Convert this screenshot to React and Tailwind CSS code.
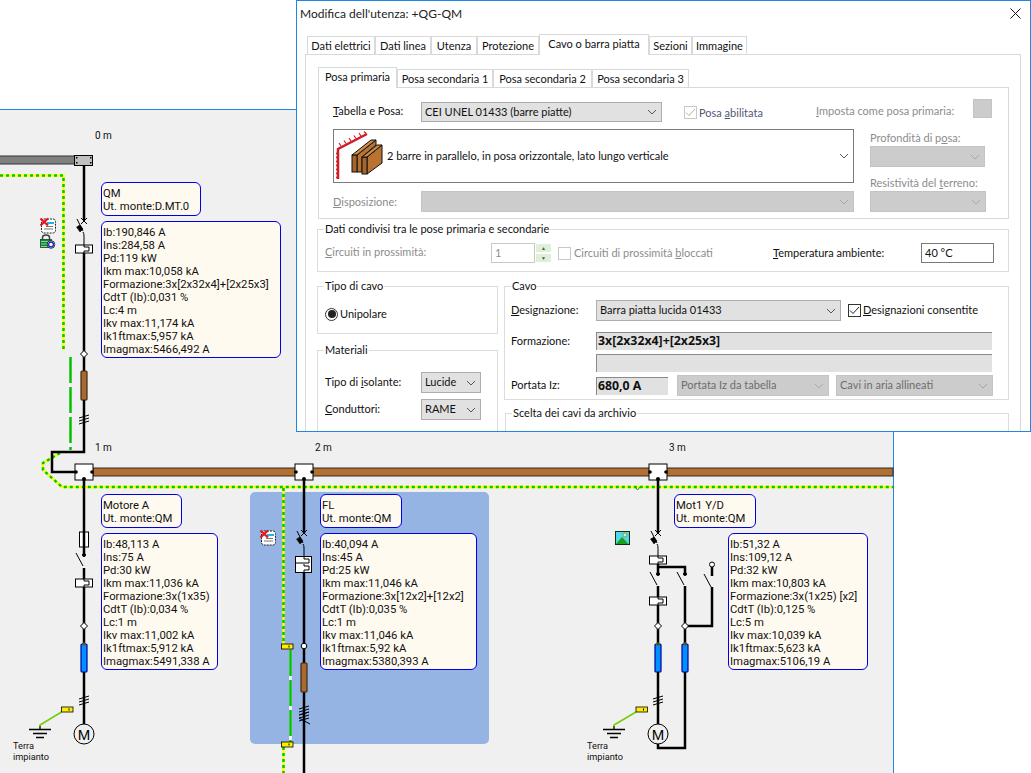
import React from "react";

const diagramFont = "font-['Roboto',sans-serif]";

const utenze = [
  {
    title: "QM",
    monte: "D.MT.0",
    headPos: "left-[101px] top-[182px] w-[100px]",
    infoPos: "left-[101px] top-[221px] w-[180px]",
    rows: [
      "Ib:190,846 A",
      "Ins:284,58 A",
      "Pd:119 kW",
      "Ikm max:10,058 kA",
      "Formazione:3x[2x32x4]+[2x25x3]",
      "CdtT (Ib):0,031 %",
      "Lc:4 m",
      "Ikv max:11,174 kA",
      "Ik1ftmax:5,957 kA",
      "Imagmax:5466,492 A",
    ],
  },
  {
    title: "Motore A",
    monte: "QM",
    headPos: "left-[101px] top-[494px] w-[81px]",
    infoPos: "left-[101px] top-[533px] w-[117px]",
    rows: [
      "Ib:48,113 A",
      "Ins:75 A",
      "Pd:30 kW",
      "Ikm max:11,036 kA",
      "Formazione:3x(1x35)",
      "CdtT (Ib):0,034 %",
      "Lc:1 m",
      "Ikv max:11,002 kA",
      "Ik1ftmax:5,912 kA",
      "Imagmax:5491,338 A",
    ],
  },
  {
    title: "FL",
    monte: "QM",
    headPos: "left-[320px] top-[494px] w-[82px]",
    infoPos: "left-[320px] top-[533px] w-[157px]",
    rows: [
      "Ib:40,094 A",
      "Ins:45 A",
      "Pd:25 kW",
      "Ikm max:11,046 kA",
      "Formazione:3x[12x2]+[12x2]",
      "CdtT (Ib):0,035 %",
      "Lc:1 m",
      "Ikv max:11,046 kA",
      "Ik1ftmax:5,92 kA",
      "Imagmax:5380,393 A",
    ],
  },
  {
    title: "Mot1 Y/D",
    monte: "QM",
    headPos: "left-[674px] top-[494px] w-[82px]",
    infoPos: "left-[728px] top-[533px] w-[140px]",
    rows: [
      "Ib:51,32 A",
      "Ins:109,12 A",
      "Pd:32 kW",
      "Ikm max:10,803 kA",
      "Formazione:3x(1x25) [x2]",
      "CdtT (Ib):0,125 %",
      "Lc:5 m",
      "Ikv max:10,039 kA",
      "Ik1ftmax:5,623 kA",
      "Imagmax:5106,19 A",
    ],
  },
];

// ---- diagram symbols ----

function Wire({ d, w = 2.5 }) {
  return <path d={d} fill="none" stroke="#000" strokeWidth={w} />;
}

function Earth({ d }) {
  return (
    <g fill="none" strokeWidth="2.5">
      <path d={d} stroke="#ffff00" />
      <path d={d} stroke="#00c800" strokeDasharray="3 3" />
    </g>
  );
}

function EarthCable({ d }) {
  return (
    <g fill="none" strokeWidth="2.5">
      <path d={d} stroke="#fff" />
      <path d={d} stroke="#00c000" strokeDasharray="26 4" />
    </g>
  );
}

function Node({ x, y = 464 }) {
  return (
    <g>
      <rect x={x} y={y} width="18" height="16" fill="#fff" stroke="#000" strokeWidth="1" />
      <circle cx={x + 1} cy={y + 8} r="1.8" fill="#000" />
      <circle cx={x + 17} cy={y + 8} r="1.8" fill="#000" />
      <circle cx={x + 9} cy={y + 15} r="2" fill="#000" />
    </g>
  );
}

function Breaker({ x, y }) {
  return (
    <g fill="none" stroke="#000">
      <path d={`M${x - 3} ${y - 3}L${x + 3} ${y + 3}M${x + 3} ${y - 3}L${x - 3} ${y + 3}`} strokeWidth="1" />
      <path d={`M${x - 7} ${y - 2}L${x - 1} ${y + 10}`} strokeWidth="1" />
      <path d={`M${x - 7.5} ${y + 6}l3.5 -2l3 4l-3 3z`} fill="#000" strokeWidth="0.5" />
      <path d={`M${x - 1} ${y + 11}Q${x} ${y + 12} ${x} ${y + 15}V${y + 24}`} strokeWidth="1" />
    </g>
  );
}

function Contact({ x, y }) {
  return (
    <g fill="none" stroke="#000">
      <circle cx={x} cy={y} r="1.5" strokeWidth="1" fill="#000" />
      <path d={`M${x - 8} ${y - 2}L${x - 1} ${y + 11}`} strokeWidth="1" />
    </g>
  );
}

function Relay({ x, y }) {
  return (
    <g fill="#fff" stroke="#000" strokeWidth="1">
      <rect x={x - 8.5} y={y} width="17" height="8" />
      <path d={`M${x} ${y}v2h5v4h-5v2`} fill="none" />
    </g>
  );
}

function Junction({ x, y }) {
  return <path d={`M${x} ${y - 3.5}L${x + 3.5} ${y}L${x} ${y + 3.5}L${x - 3.5} ${y}z`} fill="#fff" stroke="#000" strokeWidth="1" />;
}

function Cable({ x, y, h, color }) {
  const blue = color === "#0090ff";
  return (
    <g>
      <rect x={x - 3} y={y} width="6" height={h} rx="1" fill={color} stroke={blue ? "#0000a0" : "#3c2a14"} strokeWidth="1.2" />
      {blue && <circle cx={x} cy={y} r="1.8" fill="#5a5a14" />}
    </g>
  );
}

function Ticks({ x, y }) {
  return (
    <path
      d={`M${x - 5} ${y + 2}L${x + 5} ${y - 1}M${x - 5} ${y + 5}L${x + 5} ${y + 2}M${x - 5} ${y + 8}L${x + 5} ${y + 5}`}
      fill="none"
      stroke="#000"
      strokeWidth="1"
    />
  );
}

function Motor({ x, y }) {
  return (
    <g>
      <circle cx={x} cy={y} r="10" fill="#f0f0f0" stroke="#000" strokeWidth="1" />
      <text x={x} y={y + 5.5} textAnchor="middle" fontFamily="Liberation Sans" fontSize="15" fill="#000">
        M
      </text>
    </g>
  );
}

function Tag({ x, y }) {
  return (
    <g>
      <rect x={x} y={y} width="11.5" height="5" fill="#ffee00" stroke="#000" strokeWidth="0.8" />
      <rect x={x + 7} y={y + 1.5} width="1" height="2" fill="#000" />
    </g>
  );
}

function Ground({ x, tagX }) {
  return (
    <g>
      <path d={`M${x} 729V725L${tagX} 712`} fill="none" stroke="#70d000" strokeWidth="1.5" />
      <path d={`M${x} 726V729`} stroke="#000" strokeWidth="1" />
      <path d={`M${x - 11} 729.5h22M${x - 7} 733.5h14M${x - 4} 737.5h8`} stroke="#000" strokeWidth="1.5" />
      <Tag x={tagX} y={707} />
    </g>
  );
}

function RedXIcon({ x, y }) {
  return (
    <g transform={`translate(${x} ${y})`}>
      <rect x="1.5" y="1" width="14" height="14" rx="2.5" fill="#fff" stroke="#222" strokeDasharray="2 1" />
      <path d="M7 5h7" stroke="#19b4e6" strokeWidth="2" />
      <path d="M6 8.5h7M4 11h9" stroke="#777" strokeWidth="1" />
      <path d="M0.5 0.5L8 7.5M8 0.5L0.5 7.5" stroke="#e6141e" strokeWidth="2.2" />
    </g>
  );
}

function LockIcon({ x, y }) {
  return (
    <g transform={`translate(${x} ${y})`}>
      <path d="M2.5 6V3.5Q2.5 1 6 1T9.5 3.5V6" fill="none" stroke="#444" strokeWidth="1.5" />
      <rect x="0.5" y="5.5" width="11" height="8" fill="#128a3c" stroke="#0c4f20" strokeWidth="0.8" />
      <path d="M1 7.5h10M1 10h10M1 12.5h10" stroke="#b8e0b0" strokeWidth="0.8" />
      <circle cx="11" cy="10.5" r="3.8" fill="#fff" stroke="#000" strokeWidth="0.8" />
      <circle cx="11" cy="10.5" r="2.4" fill="none" stroke="#1414d2" strokeWidth="1.2" />
    </g>
  );
}

function PictureIcon({ x, y }) {
  return (
    <g transform={`translate(${x} ${y})`}>
      <rect x="0.5" y="0.5" width="14" height="13" fill="#4ed8e8" stroke="#103010" />
      <circle cx="10" cy="4" r="2" fill="#f0e68c" stroke="#555" strokeWidth="0.5" />
      <path d="M1 13L7 6L13.5 13z" fill="#18a018" />
    </g>
  );
}

function Schema() {
  return (
    <svg className="absolute left-0 top-0" width="1031" height="773" viewBox="0 0 1031 773">
      <rect x="250" y="492" width="239" height="252" rx="5" fill="#95b3e3" />

      {/* barra 0 m */}
      <rect x="-1" y="156" width="76" height="8" fill="#808080" stroke="#333" strokeWidth="1" />
      <rect x="74.5" y="155.5" width="18" height="10" fill="#c0c0c0" stroke="#000" strokeWidth="1" />
      <path d="M76 157h1.5v1.5H76zM90 157h1.5v1.5H90zM76 162h1.5v1.5H76zM90 162h1.5v1.5H90z" fill="#000" />

      {/* barra principale */}
      <rect x="93" y="468" width="800" height="8" fill="#b36f32" stroke="#2c2c2c" strokeWidth="1" />

      {/* terra */}
      <Earth d="M0 175.5H63.5V350" />
      <Earth d="M60 453L43 463L43 470L62 487H893" />
      <Earth d="M283.5 488V644" />
      <Earth d="M283.5 747V773" />
      <EarthCable d="M70.5 357V450" />
      <EarthCable d="M290.5 650V742" />
      <path d="M635 487l2.5 3l2.5 -3" fill="none" stroke="#00a000" strokeWidth="1" />

      {/* QM */}
      <Wire d="M84 165V220" />
      <Breaker x={84} y={221} />
      <Relay x={84} y={245} />
      <Wire d="M84 253V371" />
      <Junction x={84} y={354} />
      <Cable x={84} y={371} h={29} color="#a86a30" />
      <Wire d="M84 400V452H52V472H75" />
      <Ticks x={84} y={416} />
      <Node x={75} />

      {/* Motore A */}
      <Wire d="M84 480V532" />
      <rect x="79.5" y="532" width="9" height="15" fill="#fff" stroke="#000" strokeWidth="1" />
      <Wire d="M84 532V555" />
      <Contact x={84} y={555} />
      <Wire d="M84 568V644" />
      <Relay x={84} y={579} />
      <Junction x={84} y={626} />
      <Cable x={84} y={644} h={28} color="#0090ff" />
      <Wire d="M84 672V724" />
      <Ticks x={84} y={697} />
      <Motor x={84} y={734} />
      <Ground x={40} tagX={61.5} />

      {/* FL */}
      <Wire d="M304 480V533" />
      <Node x={295} />
      <Breaker x={304} y={533} />
      <rect x="295.5" y="556.5" width="16" height="16" fill="#fff" stroke="#000" strokeWidth="1" />
      <path d="M304 557v2h5v4h-13M304 564v2h5v4h-5v2" fill="none" stroke="#000" strokeWidth="1" />
      <Wire d="M304 572.5V773" />
      <circle cx="304" cy="646" r="2.8" fill="#fff" stroke="#000" strokeWidth="1" />
      <Cable x={304} y={663} h={29} color="#a86a30" />
      <Ticks x={304} y={707} />
      <Ticks x={304} y={713} />
      <path d="M299 718L310 724" fill="none" stroke="#000" strokeWidth="1" />
      <Tag x={281.5} y={644} />
      <Tag x={281.5} y={742} />
      <RedXIcon x={260} y={530} />

      {/* Mot1 Y/D */}
      <Wire d="M658 480V533" />
      <Node x={649} />
      <Breaker x={658} y={533} />
      <Relay x={658} y={556} />
      <Wire d="M658 564V575" />
      <Wire d="M658 567H685V575" />
      <Contact x={658} y={574} />
      <Contact x={685} y={574} />
      <Wire d="M658 586V644" />
      <Wire d="M685 586V644" />
      <Relay x={658} y={597} />
      <circle cx="712" cy="564.5" r="2.5" fill="#fff" stroke="#000" strokeWidth="1" />
      <Wire d="M712 567V576" />
      <path d="M704 574L711 587" fill="none" stroke="#000" strokeWidth="1" />
      <Wire d="M712 587V626H685" />
      <Junction x={658} y={626} />
      <Junction x={685} y={626} />
      <Cable x={658} y={644} h={28} color="#0090ff" />
      <Cable x={685} y={644} h={28} color="#0090ff" />
      <Wire d="M658 672V724" />
      <Wire d="M685 672V748H658V744" />
      <Ticks x={658} y={697} />
      <Motor x={658} y={734} />
      <Ground x={614} tagX={636} />
      <PictureIcon x={615} y={531} />

      {/* icone QM */}
      <RedXIcon x={40} y={218} />
      <LockIcon x={40} y={234} />
    </svg>
  );
}

function InfoBox({ pos, children }) {
  return (
    <div
      className={`absolute ${pos} rounded-[6px] border border-[#0000e6] bg-[#fffaf0] pl-[1px] pt-[4px] text-[11.3px] leading-[13px] text-[#111] whitespace-nowrap`}
    >
      {children}
    </div>
  );
}

function Distance({ pos, children }) {
  return <span className={`absolute ${pos} text-[10px] leading-[12px] text-[#111]`}>{children}</span>;
}

function TerraLabel({ pos }) {
  return (
    <div className={`absolute ${pos} text-[9.2px] leading-[11px] text-[#111]`}>
      Terra
      <br />
      impianto
    </div>
  );
}

function Diagram() {
  return (
    <div className={`absolute left-0 top-[109px] w-[894px] h-[664px] bg-[#f0f0f0] border-t border-r border-[#1e88e5] ${diagramFont}`}>
      <div className="absolute left-0 top-[-110px] w-[1031px] h-[773px]">
        <Schema />
        <Distance pos="left-[95px] top-[130px]">0 m</Distance>
        <Distance pos="left-[95px] top-[442px]">1 m</Distance>
        <Distance pos="left-[315px] top-[442px]">2 m</Distance>
        <Distance pos="left-[669px] top-[442px]">3 m</Distance>
        {utenze.map((u) => (
          <React.Fragment key={u.title}>
            <InfoBox pos={`${u.headPos} h-[34px]`}>
              <div>{u.title}</div>
              <div>Ut. monte:{u.monte}</div>
            </InfoBox>
            <InfoBox pos={`${u.infoPos} h-[137px]`}>
              {u.rows.map((r) => (
                <div key={r}>{r}</div>
              ))}
            </InfoBox>
          </React.Fragment>
        ))}
        <TerraLabel pos="left-[13px] top-[740px]" />
        <TerraLabel pos="left-[587px] top-[740px]" />
      </div>
    </div>
  );
}

// ---- dialog controls ----

function Chevron({ muted }) {
  return (
    <svg width="10" height="6" viewBox="0 0 10 6" className="shrink-0">
      <path d="M1 1L5 5L9 1" fill="none" stroke={muted ? "#a8a8a8" : "#555"} strokeWidth="1" />
    </svg>
  );
}

function Select({ className, children, disabled }) {
  return (
    <div
      className={`flex items-center justify-between border pl-[3px] pr-[4px] ${
        disabled ? "bg-[#cccccc] border-[#c4c4c4] text-[#6d6d6d]" : "bg-[#e1e1e1] border-[#adadad] text-[#111]"
      } ${className}`}
    >
      <span>{children}</span>
      <Chevron muted={disabled} />
    </div>
  );
}

function Group({ title, className, children }) {
  return (
    <div className={`relative border border-[#dcdcdc] ${className}`}>
      <span className="absolute left-[6px] top-[-9px] bg-white px-[1px] leading-[16px] text-[#111]">{title}</span>
      {children}
    </div>
  );
}

function Check({ checked, disabled }) {
  return (
    <span
      className={`flex h-[13px] w-[13px] shrink-0 items-center justify-center border ${
        disabled ? "border-[#c8c8c8]" : "border-[#333]"
      } bg-white`}
    >
      {checked && (
        <svg width="11" height="9" viewBox="0 0 11 9">
          <path d="M1 4.5L4 7.5L10 1" fill="none" stroke={disabled ? "#b0b0b0" : "#222"} strokeWidth="1" />
        </svg>
      )}
    </span>
  );
}

function MainTab({ label, w, active }) {
  return (
    <div
      className={`flex items-center justify-center whitespace-nowrap border border-b-0 border-[#d9d9d9] ${w} ${
        active ? "h-[21px] relative z-10 bg-white mb-[-1px] pb-[2px]" : "h-[18px] bg-white pt-[1px]"
      }`}
    >
      {label}
    </div>
  );
}

function BarsIcon() {
  return (
    <svg width="50" height="50" viewBox="0 0 50 50" className="shrink-0">
      <path d="M2 48V18L31 3" fill="none" stroke="#d01c28" strokeWidth="2.5" />
      <path
        d="M2 21l-2 2M2 25l-2 2M2 29l-2 2M2 33l-2 2M2 37l-2 2M2 41l-2 2M2 45l-2 2M5 15l-2 -3M10 12.5l-2 -3M15 10l-2 -3M20 7.5l-2 -3M25 5l-2 -3M30 2.5l-2 -2"
        fill="none"
        stroke="#d01c28"
        strokeWidth="1.2"
      />
      <path d="M21 24L40 9V14L26 26V41H21z" fill="#b87333" stroke="#111" />
      <rect x="16" y="24" width="5" height="17" fill="#a8652b" stroke="#111" />
      <path d="M16 24L35 9H40L21 24z" fill="#c98a4a" stroke="#111" />
      <path d="M31 26L46 14V32L31 43z" fill="#b87333" stroke="#111" />
      <rect x="26" y="26" width="5" height="17" fill="#a8652b" stroke="#111" />
      <path d="M26 26L41 14H46L31 26z" fill="#c98a4a" stroke="#111" />
    </svg>
  );
}

function Dialog() {
  const mutedText = "text-[#8c8c8c]";
  const boldValue = "font-['Noto_Sans',sans-serif] text-[12.3px] font-bold";
  return (
    <div className="absolute left-[296px] top-0 flex h-[432px] w-[735px] flex-col overflow-hidden border border-[#1e88e5] bg-white font-['Lato',sans-serif] text-[11px] text-[#111] whitespace-nowrap">
      <div className="flex h-[33px] shrink-0 items-center justify-between pl-[3px] pr-[9px] pb-[8px] text-[12px] text-[#222]">
        <span>Modifica dell'utenza: +QG-QM</span>
        <svg width="11" height="11" viewBox="0 0 11 11">
          <path d="M0.5 0.5L10.5 10.5M10.5 0.5L0.5 10.5" stroke="#111" strokeWidth="1" />
        </svg>
      </div>

      <div className="flex h-[20px] shrink-0 items-end pl-[10px]">
        <MainTab label="Dati elettrici" w="w-[68px]" />
        <MainTab label="Dati linea" w="w-[56px]" />
        <MainTab label="Utenza" w="w-[46px]" />
        <MainTab label="Protezione" w="w-[62px]" />
        <MainTab label="Cavo o barra piatta" w="w-[110px]" active />
        <MainTab label="Sezioni" w="w-[43px]" />
        <MainTab label="Immagine" w="w-[55px]" />
      </div>

      <div className="ml-[8px] w-[716px] flex-1 border border-b-0 border-[#d9d9d9] pl-[11px] pt-[12px]">
        <div className="ml-[1px] flex h-[20px] items-end">
          <MainTab label="Posa primaria" w="w-[79px]" active />
          <MainTab label="Posa secondaria 1" w="w-[96px]" />
          <MainTab label="Posa secondaria 2" w="w-[99px]" />
          <MainTab label="Posa secondaria 3" w="w-[97px]" />
        </div>

        <div className="ml-[1px] h-[132px] w-[691px] border border-[#d9d9d9] pl-[14px] pt-[11px]">
          <div className="flex h-[23px]">
            <span className="w-[88px] self-center pt-[2px]">
              <u>T</u>abella e Posa:
            </span>
            <Select className="h-[20px] w-[241px] self-end">CEI UNEL 01433 (barre piatte)</Select>
            <div className="ml-[22px] flex w-[132px] items-center gap-[2px] self-end pb-[1px] text-[#555577]">
              <Check checked disabled />
              <span>
                Posa <u>a</u>bilitata
              </span>
            </div>
            <span className={`w-[157px] self-center pt-[2px] ${mutedText}`}>
              <u>I</u>mposta come posa primaria:
            </span>
            <div className="h-[19px] w-[19px] border border-[#c4c4c4] bg-[#cccccc]" />
          </div>

          <div className="mt-[7px] flex gap-[16px]">
            <div className="w-[521px]">
              <div className="flex h-[54px] items-center border border-[#7a7a7a] pl-[2px] pr-[4px]">
                <BarsIcon />
                <span className="ml-[1px] flex-1">2 barre in parallelo, in posa orizzontale, lato lungo verticale</span>
                <Chevron />
              </div>
              <div className="mt-[8px] flex items-center">
                <span className={`w-[88px] pt-[2px] ${mutedText}`}>
                  <u>D</u>isposizione:
                </span>
                <Select disabled className="h-[21px] w-[433px]" />
              </div>
            </div>
            <div className={`w-[116px] ${mutedText}`}>
              <div className="h-[17px] leading-[17px]">
                Profondità di p<u>o</u>sa:
              </div>
              <Select disabled className="h-[21px] w-[115px]" />
              <div className="mt-[7px] h-[17px] leading-[17px]">
                Resistività del <u>t</u>erreno:
              </div>
              <Select disabled className="h-[21px] w-[116px]" />
            </div>
          </div>
        </div>

        <Group title="Dati condivisi tra le pose primaria e secondarie" className="mt-[10px] h-[43px] w-[692px]">
          <div className="mt-[13px] flex h-[20px] items-center pl-[7px]">
            <span className={`w-[166px] pb-[2px] ${mutedText}`}>
              <u>C</u>ircuiti in prossimità:
            </span>
            <div className={`flex h-[20px] w-[44px] items-center border border-[#c8c8c8] pl-[3px] ${mutedText}`}>1</div>
            <div className="ml-[1px] flex h-[18px] w-[15px] flex-col justify-between">
              <span className="flex h-[8px] items-center justify-center bg-[#dff0d8] text-[5px] leading-none text-[#555]">▲</span>
              <span className="flex h-[8px] items-center justify-center bg-[#dff0d8] text-[5px] leading-none text-[#555]">▼</span>
            </div>
            <div className="ml-[7px]">
              <Check disabled />
            </div>
            <span className={`ml-[3px] w-[199px] ${mutedText}`}>
              Circuiti di prossimità <u>b</u>loccati
            </span>
            <span className="w-[148px]">
              <u>T</u>emperatura ambiente:
            </span>
            <div className="flex h-[20px] w-[73px] items-center border border-[#7a7a7a] pl-[3px]">40 °C</div>
          </div>
        </Group>

        <div className="mt-[14px] flex gap-[6px]">
          <div className="w-[181px]">
            <Group title="Tipo di cavo" className="h-[48px]">
              <div className="mt-[19px] flex items-center gap-[2px] pl-[7px]">
                <span className="flex h-[13px] w-[13px] items-center justify-center rounded-full border border-[#333]">
                  <span className="h-[8px] w-[8px] rounded-full bg-[#222]" />
                </span>
                Unipolare
              </div>
            </Group>
            <Group title="Materiali" className="mt-[16px] h-[100px]">
              <div className="mt-[21px] flex items-center pl-[7px]">
                <span className="w-[96px]">
                  Tipo di <u>i</u>solante:
                </span>
                <Select className="h-[21px] w-[60px]">Lucide</Select>
              </div>
              <div className="mt-[6px] flex items-center pl-[7px]">
                <span className="w-[96px]">
                  <u>C</u>onduttori:
                </span>
                <Select className="h-[21px] w-[60px]">RAME</Select>
              </div>
            </Group>
          </div>

          <div className="w-[505px]">
            <Group title="Cavo" className="h-[114px]">
              <div className="mt-[13px] flex items-center pl-[6px]">
                <span className="w-[85px]">
                  <u>D</u>esignazione:
                </span>
                <Select className="h-[21px] w-[245px]">Barra piatta lucida 01433</Select>
                <div className="ml-[7px] flex items-center gap-[2px]">
                  <Check checked />
                  <span>
                    <u>D</u>esignazioni consentite
                  </span>
                </div>
              </div>
              <div className="mt-[11px] flex items-center pl-[6px]">
                <span className="w-[85px]">Formazione:</span>
                <div className={`flex h-[18px] w-[396px] items-center border-t border-l border-[#8a8a8a] bg-[#e1e1e1] pl-[1px] ${boldValue}`}>
                  3x[2x32x4]+[2x25x3]
                </div>
              </div>
              <div className="mt-[4px] flex pl-[91px]">
                <div className="h-[18px] w-[396px] border-t border-l border-[#8a8a8a] bg-[#e1e1e1]" />
              </div>
              <div className="mt-[3px] flex items-center pl-[6px]">
                <span className="w-[85px]">Portata Iz:</span>
                <div className={`flex h-[18px] w-[72px] items-center border-t border-l border-[#8a8a8a] bg-[#e1e1e1] pl-[1px] ${boldValue}`}>
                  680,0 A
                </div>
                <Select disabled className="ml-[9px] h-[21px] w-[152px]">
                  Portata Iz da tabella
                </Select>
                <Select disabled className="ml-[7px] h-[21px] w-[157px]">
                  Cavi in aria allineati
                </Select>
              </div>
            </Group>
            <Group title="Scelta dei cavi da archivio" className="ml-[1px] mt-[13px] h-[60px]" />
          </div>
        </div>
      </div>
    </div>
  );
}

export default function App() {
  return (
    <div className="relative h-[773px] w-[1031px] overflow-hidden bg-white">
      <Diagram />
      <Dialog />
    </div>
  );
}
